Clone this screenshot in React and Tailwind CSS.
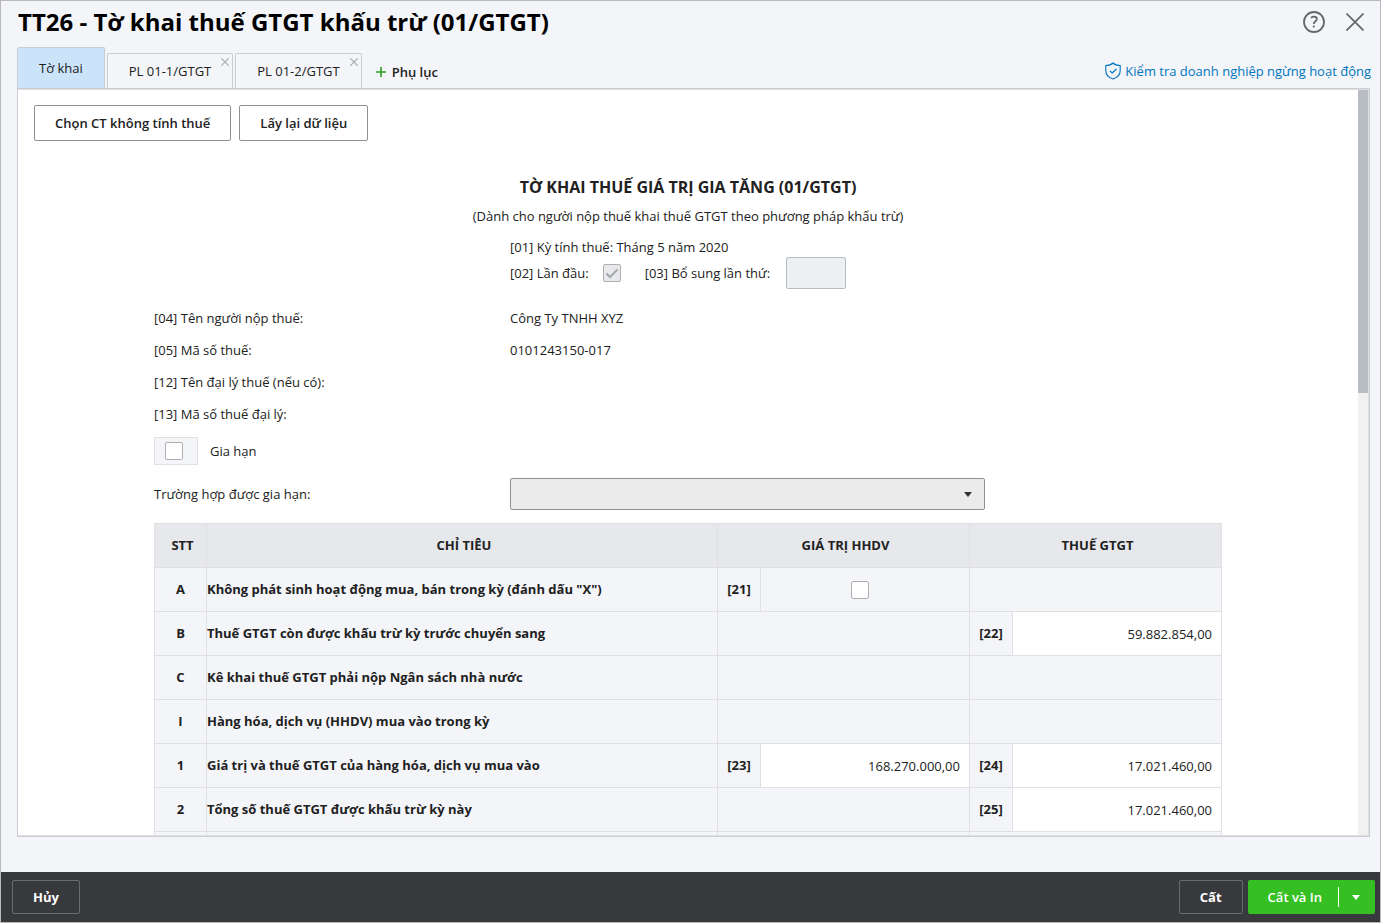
import React from "react";

const ROWS = [
  { stt: "A", name: 'Không phát sinh hoạt động mua, bán trong kỳ (đánh dấu "X")', a: { code: "[21]", check: true } },
  { stt: "B", name: "Thuế GTGT còn được khấu trừ kỳ trước chuyển sang", b: { code: "[22]", value: "59.882.854,00" } },
  { stt: "C", name: "Kê khai thuế GTGT phải nộp Ngân sách nhà nước" },
  { stt: "I", name: "Hàng hóa, dịch vụ (HHDV) mua vào trong kỳ" },
  {
    stt: "1",
    name: "Giá trị và thuế GTGT của hàng hóa, dịch vụ mua vào",
    a: { code: "[23]", value: "168.270.000,00" },
    b: { code: "[24]", value: "17.021.460,00" },
  },
  { stt: "2", name: "Tổng số thuế GTGT được khấu trừ kỳ này", b: { code: "[25]", value: "17.021.460,00" } },
  { stt: "", name: "" },
];

const CHECKBOX =
  "block size-[18px] appearance-none rounded-xs border border-[#afafaf] bg-white";

function Caret({ className }) {
  return (
    <svg viewBox="0 0 8 5" className={className} fill="currentColor" aria-hidden="true">
      <path d="M0 0h8L4 5z" />
    </svg>
  );
}

function Tab({ children }) {
  return (
    <div className="relative flex h-[35px] items-center rounded-t-xs border border-b-0 border-[#c9ccd2] px-[21px]">
      <button type="button" role="tab" aria-selected="false">
        {children}
      </button>
      <button type="button" aria-label="Đóng" className="absolute top-1 right-[3px] text-[#a9acb3]">
        <svg viewBox="0 0 8 8" className="size-2" stroke="currentColor" strokeWidth="1.2" fill="none">
          <path d="M.3.3l7.4 7.4M7.7.3L.3 7.7" />
        </svg>
      </button>
    </div>
  );
}

function Field({ label, children }) {
  return (
    <div className="flex h-8 items-center">
      <dt className="w-1/3 shrink-0">{label}</dt>
      <dd>{children}</dd>
    </div>
  );
}

function ValueCells({ cell, row }) {
  if (!cell) return <td colSpan={2} className="border border-[#e0e0e0]" />;
  return (
    <>
      <td className="border border-[#e0e0e0] pb-0.5 text-center font-bold">{cell.code}</td>
      {cell.check ? (
        <td className="border border-[#e0e0e0] pr-2.5">
          <input type="checkbox" aria-label={row.name} className={CHECKBOX + " mx-auto"} />
        </td>
      ) : (
        <td className="border border-[#e0e0e0] bg-white">
          <input
            type="text"
            aria-label={cell.code + " " + row.name}
            defaultValue={cell.value}
            className="block w-full bg-transparent px-[9px] pt-px text-right outline-none"
          />
        </td>
      )}
    </>
  );
}

export default function App() {
  return (
    <div className="flex h-screen flex-col border border-[#b9b9b9] bg-[#f4f5f9] font-['Open_Sans','Noto_Sans',sans-serif] text-[13px] leading-5 text-[#212121]">
      <header className="flex items-center justify-between pr-4 pl-[17px]">
        <h1 className="text-2xl leading-[42px] font-bold text-black">TT26 - Tờ khai thuế GTGT khấu trừ (01/GTGT)</h1>
        <div className="flex items-center gap-[21px] text-[#65676c]">
          <button type="button" aria-label="Trợ giúp">
            <svg viewBox="0 0 22 22" className="size-[22px]" fill="none" stroke="currentColor" strokeWidth="1.8">
              <circle cx="11" cy="11" r="10" />
              <path d="M8 6.800C8.800 6 9.800 5.600 11 5.600c1.800 0 2.900.9 2.900 2.400 0 2.200-3.100 2.200-3.100 4.900" />
              <path d="M10.800 14.500v2" />
            </svg>
          </button>
          <button type="button" aria-label="Đóng cửa sổ">
            <svg viewBox="0 0 18 18" className="size-[18px]" fill="none" stroke="currentColor" strokeWidth="1.7">
              <path d="M.5.5l17 17M17.500.5l-17 17" />
            </svg>
          </button>
        </div>
      </header>

      <div className="flex items-end pr-[9px] pl-4">
        <div role="tablist" className="flex items-end">
          <button
            type="button"
            role="tab"
            aria-selected="true"
            className="mt-1 h-[41px] rounded-t-xs border border-b-0 border-[#c9ccd2] bg-[#cce4fa] px-[21px]"
          >
            Tờ khai
          </button>
          <div className="ml-0.5 flex gap-0.5">
            <Tab>PL 01-1/GTGT</Tab>
            <Tab>PL 01-2/GTGT</Tab>
          </div>
        </div>
        <button type="button" className="ml-3.5 flex h-8 items-center gap-1.5 font-semibold">
          <svg viewBox="0 0 10 10" className="size-2.5 text-[#2ca01c]" fill="none" stroke="currentColor" strokeWidth="1.6">
            <path d="M5 0v10M0 5h10" />
          </svg>
          Phụ lục
        </button>
        <a href="#kiem-tra" className="ml-auto flex h-[34px] items-center gap-1 text-[#0075c0]">
          <svg viewBox="0 0 16 18" className="h-[18px] w-4" fill="none" stroke="currentColor" strokeWidth="1.1">
            <path d="M8 1C6.500 2.500 3.500 3.500.8 3.500v5C.8 12.500 4 15.800 8 17c4-1.200 7.200-4.500 7.200-8.500v-5C12.500 3.500 9.500 2.500 8 1z" />
            <path d="M5 9l2.200 2L11.500 7" />
          </svg>
          Kiểm tra doanh nghiệp ngừng hoạt động
        </a>
      </div>

      <main className="mr-2.5 mb-[35px] ml-4 flex min-h-0 flex-1 border border-[#c9ccd2] bg-white">
        <div className="min-w-0 flex-1 overflow-hidden border-t border-b border-[#e0e0e0] px-4 pt-[15px]">
          <div className="flex gap-2 font-semibold">
            <button type="button" className="h-9 rounded-xs border border-[#8d9096] px-5">
              Chọn CT không tính thuế
            </button>
            <button type="button" className="h-9 rounded-xs border border-[#8d9096] px-5">
              Lấy lại dữ liệu
            </button>
          </div>

          <div className="mx-auto max-w-[1068px]">
            <div className="pt-9 text-center">
              <h2 className="text-base leading-5 font-bold">TỜ KHAI THUẾ GIÁ TRỊ GIA TĂNG (01/GTGT)</h2>
              <p className="mt-[9px]">(Dành cho người nộp thuế khai thuế GTGT theo phương pháp khấu trừ)</p>
            </div>
            <div className="ml-[33.33%] pt-[11px]">
              <p>[01] Kỳ tính thuế: Tháng 5 năm 2020</p>
              <div className="flex h-8 items-center">
                <label htmlFor="first">[02] Lần đầu:</label>
                <span className="relative ml-3.5">
                  <input
                    id="first"
                    type="checkbox"
                    defaultChecked
                    disabled
                    className="block size-[18px] appearance-none rounded-xs border border-[#afafaf] bg-[#e8e9ec]"
                  />
                  <svg
                    viewBox="0 0 18 18"
                    className="pointer-events-none absolute inset-0 size-[18px] text-[#a6a7ab]"
                    fill="none"
                    stroke="currentColor"
                    strokeWidth="2"
                  >
                    <path d="M3.500 9.500l3.500 3.500L14.500 5.500" />
                  </svg>
                </span>
                <label htmlFor="times" className="ml-6">
                  [03] Bổ sung lần thứ:
                </label>
                <input
                  id="times"
                  type="text"
                  disabled
                  className="ml-4 h-8 w-[60px] rounded-xs border border-[#b8bcc5] bg-[#eeeff2] px-2"
                />
              </div>
            </div>

            <dl className="pt-[13px]">
              <Field label="[04] Tên người nộp thuế:">Công Ty TNHH XYZ</Field>
              <Field label="[05] Mã số thuế:">0101243150-017</Field>
              <Field label="[12] Tên đại lý thuế (nếu có):" />
              <Field label="[13] Mã số thuế đại lý:" />
            </dl>

            <div className="mt-[7px] flex items-center gap-3">
              <div className="flex h-7 w-11 items-center border border-[#e0e0e0] bg-[#f4f5f9] pl-2.5">
                <input id="extend" type="checkbox" className={CHECKBOX} />
              </div>
              <label htmlFor="extend">Gia hạn</label>
            </div>

            <div className="mt-[13px] flex items-center">
              <label htmlFor="case" className="w-1/3 shrink-0">
                Trường hợp được gia hạn:
              </label>
              <div className="relative w-[475px]">
                <select
                  id="case"
                  className="block h-8 w-full appearance-none rounded-xs border border-[#8d9096] bg-[#ebebeb] px-3"
                />
                <Caret className="pointer-events-none absolute top-3.5 right-[13px] h-[5px] w-2 text-[#333]" />
              </div>
            </div>

            <table className="mt-[13px] w-full table-fixed border-collapse bg-[#f4f5f9]">
              <colgroup>
                <col className="w-[52px]" />
                <col />
                <col className="w-[43px]" />
                <col className="w-[209px]" />
                <col className="w-[43px]" />
                <col className="w-[209px]" />
              </colgroup>
              <thead>
                <tr className="h-11 bg-[#e7e8ec]">
                  <th className="border border-[#e0e0e0] pb-0.5 pl-1">STT</th>
                  <th className="border border-[#e0e0e0] pb-0.5 pl-1">CHỈ TIÊU</th>
                  <th colSpan={2} className="border border-[#e0e0e0] pb-0.5 pl-1">
                    GIÁ TRỊ HHDV
                  </th>
                  <th colSpan={2} className="border border-[#e0e0e0] pb-0.5 pl-1">
                    THUẾ GTGT
                  </th>
                </tr>
              </thead>
              <tbody>
                {ROWS.map((row, i) => (
                  <tr key={i} className="h-11">
                    <td className="border border-[#e0e0e0] pb-0.5 text-center font-bold">{row.stt}</td>
                    <td className="border border-[#e0e0e0] pb-0.5 font-bold">{row.name}</td>
                    <ValueCells cell={row.a} row={row} />
                    <ValueCells cell={row.b} row={row} />
                  </tr>
                ))}
              </tbody>
            </table>
          </div>
        </div>
        <div className="w-[11px] shrink-0 border-t border-r border-b border-[#e0e0e0] bg-[#f1f1f1]" aria-hidden="true">
          <div className="h-[303px] bg-[#b8bcc3]" />
        </div>
      </main>

      <footer className="flex h-[50px] shrink-0 items-center bg-[#38393d] pr-[5px] pl-[11px] font-bold text-white">
        <button type="button" className="h-[34px] rounded-xs border border-[#6b6c70] px-5">
          Hủy
        </button>
        <button type="button" className="ml-auto h-[34px] rounded-xs border border-[#6b6c70] px-5">
          Cất
        </button>
        <div className="ml-[5px] flex h-[34px] items-center rounded-xs bg-[#35bf22]">
          <button type="button" className="h-full pr-4 pl-5 font-semibold">
            Cất và In
          </button>
          <span className="h-5 w-px bg-white" />
          <button type="button" aria-label="Tùy chọn khác" className="flex h-full items-center pr-[15px] pl-[13px]">
            <Caret className="h-[5px] w-2" />
          </button>
        </div>
      </footer>
    </div>
  );
}
